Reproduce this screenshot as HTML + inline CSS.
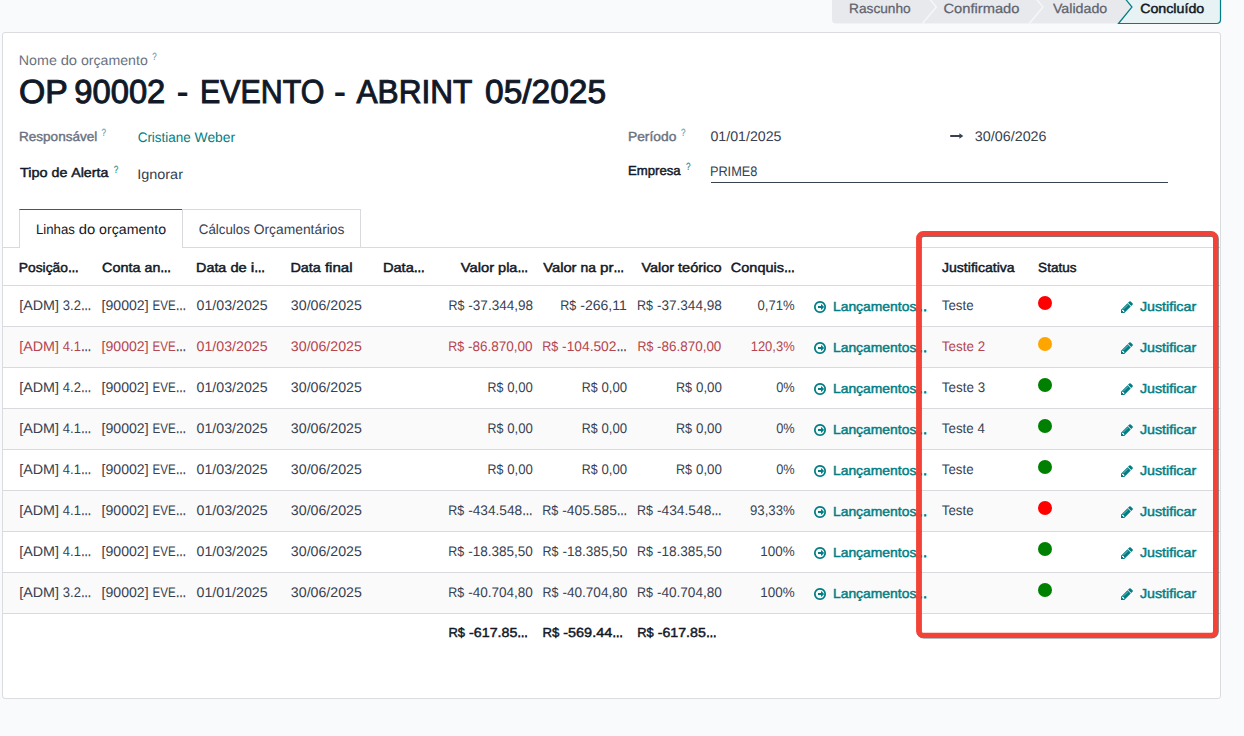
<!DOCTYPE html><html lang="pt-BR"><head><meta charset="utf-8"><title>Orçamento</title><style>
html,body{margin:0;padding:0}
body{width:1244px;height:736px;overflow:hidden;background:#f9fafb;font-family:"Liberation Sans",sans-serif;position:relative}
.t{position:absolute;white-space:nowrap;transform-origin:0 0;text-rendering:geometricPrecision}
.abs{position:absolute}
.ln{position:absolute;height:1px;background:#d8dadd}
.dot{position:absolute;width:14px;height:14px;border-radius:50%}
</style></head><body>
<svg class="abs" style="left:820px;top:0" width="424" height="30" viewBox="820 0 424 30">
<path d="M832 -10 H1118.5 L1132 7 L1118.5 23.5 H836 Q832 23.5 832 19.5 Z" fill="#e7e9ed"/>
<path d="M922.5 -9.5 L936.3 7 L922.5 23.5" fill="none" stroke="#f6f7f9" stroke-width="1.4"/>
<path d="M1029.3 -9.5 L1043 7 L1029.3 23.5" fill="none" stroke="#f6f7f9" stroke-width="1.4"/>
<path d="M1105 -26 L1132 7 L1118.5 23.5 H1216.5 Q1220.5 23.5 1220.5 19.5 V-10 Z" fill="#e6f2f3" stroke="#017e84" stroke-width="1.2"/>
</svg>
<div class="abs" style="left:2px;top:32px;width:1217px;height:665px;background:#fff;border:1px solid #dadcdf;border-radius:3px"></div>
<div class="abs" style="left:710.5px;top:182px;width:457px;height:1px;background:#374151"></div>
<svg class="abs" style="left:949px;top:130px" width="16" height="12" viewBox="949 130 16 12"><path d="M950.2 135 H959.4 V133.3 L963.3 136 L959.4 138.7 V137 H950.2 Z" fill="#374151"/></svg>
<div class="ln" style="left:3px;top:247px;width:1217px"></div>
<div class="abs" style="left:19px;top:209px;width:162px;height:38px;background:#fff;border:1px solid #d8dadd;border-top-color:#5f4a5a;border-bottom:0;box-sizing:content-box"></div><div class="abs" style="left:20px;top:247px;width:162px;height:1px;background:#fff"></div>
<div class="abs" style="left:182px;top:209px;width:178px;height:38px;border:1px solid #d8dadd;border-left:0;border-bottom:0"></div>
<div class="abs" style="left:3px;top:327px;width:1217px;height:40px;background:#fafafb"></div>
<div class="abs" style="left:3px;top:409px;width:1217px;height:40px;background:#fafafb"></div>
<div class="abs" style="left:3px;top:491px;width:1217px;height:40px;background:#fafafb"></div>
<div class="abs" style="left:3px;top:573px;width:1217px;height:40px;background:#fafafb"></div>
<div class="ln" style="left:3px;top:285px;width:1217px"></div>
<div class="ln" style="left:3px;top:326px;width:1217px"></div>
<div class="ln" style="left:3px;top:367px;width:1217px"></div>
<div class="ln" style="left:3px;top:408px;width:1217px"></div>
<div class="ln" style="left:3px;top:449px;width:1217px"></div>
<div class="ln" style="left:3px;top:490px;width:1217px"></div>
<div class="ln" style="left:3px;top:531px;width:1217px"></div>
<div class="ln" style="left:3px;top:572px;width:1217px"></div>
<div class="ln" style="left:3px;top:613px;width:1217px"></div>
<div class="dot" style="left:1038px;top:296px;background:#ff0000"></div>
<svg class="abs" style="left:813.8px;top:301.3px" width="12" height="12" viewBox="0 -1408 1536 1536"><path transform="scale(1,-1)" fill="#017e84" d="M1280 640q0 -14 -9 -23l-320 -320q-9 -9 -23 -9q-13 0 -22.500 9.500t-9.500 22.500v192h-352q-13 0 -22.500 9.500t-9.500 22.500v192q0 13 9.500 22.500t22.500 9.500h352v192q0 14 9 23t23 9q12 0 24 -10l319 -319q9 -9 9 -23zM1312 640q0 148 -73 273t-198 198t-273 73t-273 -73t-198 -198t-73 -273t73 -273t198 -198t273 -73t273 73t198 198t73 273zM1536 640q0 -209 -103 -385.500t-279.500 -279.500t-385.500 -103t-385.500 103t-279.500 279.500t-103 385.500t103 385.500t279.500 279.500t385.500 103t385.500 -103t279.500 -279.500t103 -385.500z"/></svg>
<svg class="abs" style="left:1121px;top:300.8px" width="12" height="12" viewBox="0 -1408 1536 1536"><path transform="scale(1,-1)" fill="#017e84" d="M363 0l91 91l-235 235l-91 -91v-107h128v-128h107zM886 928q0 22 -22 22q-10 0 -17 -7l-542 -542q-7 -7 -7 -17q0 -22 22 -22q10 0 17 7l542 542q7 7 7 17zM832 1120l416 -416l-832 -832h-416v416zM1515 1024q0 -53 -37 -90l-166 -166l-416 416l166 165q36 38 90 38q53 0 91 -38l235 -234q37 -39 37 -91z"/></svg>
<div class="dot" style="left:1038px;top:337px;background:#ffa500"></div>
<svg class="abs" style="left:813.8px;top:342.3px" width="12" height="12" viewBox="0 -1408 1536 1536"><path transform="scale(1,-1)" fill="#017e84" d="M1280 640q0 -14 -9 -23l-320 -320q-9 -9 -23 -9q-13 0 -22.500 9.500t-9.500 22.500v192h-352q-13 0 -22.500 9.500t-9.500 22.500v192q0 13 9.500 22.500t22.500 9.500h352v192q0 14 9 23t23 9q12 0 24 -10l319 -319q9 -9 9 -23zM1312 640q0 148 -73 273t-198 198t-273 73t-273 -73t-198 -198t-73 -273t73 -273t198 -198t273 -73t273 73t198 198t73 273zM1536 640q0 -209 -103 -385.500t-279.500 -279.500t-385.500 -103t-385.500 103t-279.500 279.500t-103 385.500t103 385.500t279.500 279.500t385.500 103t385.500 -103t279.500 -279.500t103 -385.500z"/></svg>
<svg class="abs" style="left:1121px;top:341.8px" width="12" height="12" viewBox="0 -1408 1536 1536"><path transform="scale(1,-1)" fill="#017e84" d="M363 0l91 91l-235 235l-91 -91v-107h128v-128h107zM886 928q0 22 -22 22q-10 0 -17 -7l-542 -542q-7 -7 -7 -17q0 -22 22 -22q10 0 17 7l542 542q7 7 7 17zM832 1120l416 -416l-832 -832h-416v416zM1515 1024q0 -53 -37 -90l-166 -166l-416 416l166 165q36 38 90 38q53 0 91 -38l235 -234q37 -39 37 -91z"/></svg>
<div class="dot" style="left:1038px;top:378px;background:#008000"></div>
<svg class="abs" style="left:813.8px;top:383.3px" width="12" height="12" viewBox="0 -1408 1536 1536"><path transform="scale(1,-1)" fill="#017e84" d="M1280 640q0 -14 -9 -23l-320 -320q-9 -9 -23 -9q-13 0 -22.500 9.500t-9.500 22.500v192h-352q-13 0 -22.500 9.500t-9.500 22.500v192q0 13 9.500 22.500t22.500 9.500h352v192q0 14 9 23t23 9q12 0 24 -10l319 -319q9 -9 9 -23zM1312 640q0 148 -73 273t-198 198t-273 73t-273 -73t-198 -198t-73 -273t73 -273t198 -198t273 -73t273 73t198 198t73 273zM1536 640q0 -209 -103 -385.500t-279.500 -279.500t-385.500 -103t-385.500 103t-279.500 279.500t-103 385.500t103 385.500t279.500 279.500t385.500 103t385.500 -103t279.500 -279.500t103 -385.500z"/></svg>
<svg class="abs" style="left:1121px;top:382.8px" width="12" height="12" viewBox="0 -1408 1536 1536"><path transform="scale(1,-1)" fill="#017e84" d="M363 0l91 91l-235 235l-91 -91v-107h128v-128h107zM886 928q0 22 -22 22q-10 0 -17 -7l-542 -542q-7 -7 -7 -17q0 -22 22 -22q10 0 17 7l542 542q7 7 7 17zM832 1120l416 -416l-832 -832h-416v416zM1515 1024q0 -53 -37 -90l-166 -166l-416 416l166 165q36 38 90 38q53 0 91 -38l235 -234q37 -39 37 -91z"/></svg>
<div class="dot" style="left:1038px;top:419px;background:#008000"></div>
<svg class="abs" style="left:813.8px;top:424.3px" width="12" height="12" viewBox="0 -1408 1536 1536"><path transform="scale(1,-1)" fill="#017e84" d="M1280 640q0 -14 -9 -23l-320 -320q-9 -9 -23 -9q-13 0 -22.500 9.500t-9.500 22.500v192h-352q-13 0 -22.500 9.500t-9.500 22.500v192q0 13 9.500 22.500t22.500 9.500h352v192q0 14 9 23t23 9q12 0 24 -10l319 -319q9 -9 9 -23zM1312 640q0 148 -73 273t-198 198t-273 73t-273 -73t-198 -198t-73 -273t73 -273t198 -198t273 -73t273 73t198 198t73 273zM1536 640q0 -209 -103 -385.500t-279.500 -279.500t-385.500 -103t-385.500 103t-279.500 279.500t-103 385.500t103 385.500t279.500 279.500t385.500 103t385.500 -103t279.500 -279.500t103 -385.500z"/></svg>
<svg class="abs" style="left:1121px;top:423.8px" width="12" height="12" viewBox="0 -1408 1536 1536"><path transform="scale(1,-1)" fill="#017e84" d="M363 0l91 91l-235 235l-91 -91v-107h128v-128h107zM886 928q0 22 -22 22q-10 0 -17 -7l-542 -542q-7 -7 -7 -17q0 -22 22 -22q10 0 17 7l542 542q7 7 7 17zM832 1120l416 -416l-832 -832h-416v416zM1515 1024q0 -53 -37 -90l-166 -166l-416 416l166 165q36 38 90 38q53 0 91 -38l235 -234q37 -39 37 -91z"/></svg>
<div class="dot" style="left:1038px;top:460px;background:#008000"></div>
<svg class="abs" style="left:813.8px;top:465.3px" width="12" height="12" viewBox="0 -1408 1536 1536"><path transform="scale(1,-1)" fill="#017e84" d="M1280 640q0 -14 -9 -23l-320 -320q-9 -9 -23 -9q-13 0 -22.500 9.500t-9.500 22.500v192h-352q-13 0 -22.500 9.500t-9.500 22.500v192q0 13 9.500 22.500t22.500 9.500h352v192q0 14 9 23t23 9q12 0 24 -10l319 -319q9 -9 9 -23zM1312 640q0 148 -73 273t-198 198t-273 73t-273 -73t-198 -198t-73 -273t73 -273t198 -198t273 -73t273 73t198 198t73 273zM1536 640q0 -209 -103 -385.500t-279.500 -279.500t-385.500 -103t-385.500 103t-279.500 279.500t-103 385.500t103 385.500t279.500 279.500t385.500 103t385.500 -103t279.500 -279.500t103 -385.500z"/></svg>
<svg class="abs" style="left:1121px;top:464.8px" width="12" height="12" viewBox="0 -1408 1536 1536"><path transform="scale(1,-1)" fill="#017e84" d="M363 0l91 91l-235 235l-91 -91v-107h128v-128h107zM886 928q0 22 -22 22q-10 0 -17 -7l-542 -542q-7 -7 -7 -17q0 -22 22 -22q10 0 17 7l542 542q7 7 7 17zM832 1120l416 -416l-832 -832h-416v416zM1515 1024q0 -53 -37 -90l-166 -166l-416 416l166 165q36 38 90 38q53 0 91 -38l235 -234q37 -39 37 -91z"/></svg>
<div class="dot" style="left:1038px;top:501px;background:#ff0000"></div>
<svg class="abs" style="left:813.8px;top:506.3px" width="12" height="12" viewBox="0 -1408 1536 1536"><path transform="scale(1,-1)" fill="#017e84" d="M1280 640q0 -14 -9 -23l-320 -320q-9 -9 -23 -9q-13 0 -22.500 9.500t-9.500 22.500v192h-352q-13 0 -22.500 9.500t-9.500 22.500v192q0 13 9.500 22.500t22.500 9.500h352v192q0 14 9 23t23 9q12 0 24 -10l319 -319q9 -9 9 -23zM1312 640q0 148 -73 273t-198 198t-273 73t-273 -73t-198 -198t-73 -273t73 -273t198 -198t273 -73t273 73t198 198t73 273zM1536 640q0 -209 -103 -385.500t-279.500 -279.500t-385.500 -103t-385.500 103t-279.500 279.500t-103 385.500t103 385.500t279.500 279.500t385.500 103t385.500 -103t279.500 -279.500t103 -385.500z"/></svg>
<svg class="abs" style="left:1121px;top:505.8px" width="12" height="12" viewBox="0 -1408 1536 1536"><path transform="scale(1,-1)" fill="#017e84" d="M363 0l91 91l-235 235l-91 -91v-107h128v-128h107zM886 928q0 22 -22 22q-10 0 -17 -7l-542 -542q-7 -7 -7 -17q0 -22 22 -22q10 0 17 7l542 542q7 7 7 17zM832 1120l416 -416l-832 -832h-416v416zM1515 1024q0 -53 -37 -90l-166 -166l-416 416l166 165q36 38 90 38q53 0 91 -38l235 -234q37 -39 37 -91z"/></svg>
<div class="dot" style="left:1038px;top:542px;background:#008000"></div>
<svg class="abs" style="left:813.8px;top:547.3px" width="12" height="12" viewBox="0 -1408 1536 1536"><path transform="scale(1,-1)" fill="#017e84" d="M1280 640q0 -14 -9 -23l-320 -320q-9 -9 -23 -9q-13 0 -22.500 9.500t-9.500 22.500v192h-352q-13 0 -22.500 9.500t-9.500 22.500v192q0 13 9.500 22.500t22.500 9.500h352v192q0 14 9 23t23 9q12 0 24 -10l319 -319q9 -9 9 -23zM1312 640q0 148 -73 273t-198 198t-273 73t-273 -73t-198 -198t-73 -273t73 -273t198 -198t273 -73t273 73t198 198t73 273zM1536 640q0 -209 -103 -385.500t-279.500 -279.500t-385.500 -103t-385.500 103t-279.500 279.500t-103 385.500t103 385.500t279.500 279.500t385.500 103t385.500 -103t279.500 -279.500t103 -385.500z"/></svg>
<svg class="abs" style="left:1121px;top:546.8px" width="12" height="12" viewBox="0 -1408 1536 1536"><path transform="scale(1,-1)" fill="#017e84" d="M363 0l91 91l-235 235l-91 -91v-107h128v-128h107zM886 928q0 22 -22 22q-10 0 -17 -7l-542 -542q-7 -7 -7 -17q0 -22 22 -22q10 0 17 7l542 542q7 7 7 17zM832 1120l416 -416l-832 -832h-416v416zM1515 1024q0 -53 -37 -90l-166 -166l-416 416l166 165q36 38 90 38q53 0 91 -38l235 -234q37 -39 37 -91z"/></svg>
<div class="dot" style="left:1038px;top:583px;background:#008000"></div>
<svg class="abs" style="left:813.8px;top:588.3px" width="12" height="12" viewBox="0 -1408 1536 1536"><path transform="scale(1,-1)" fill="#017e84" d="M1280 640q0 -14 -9 -23l-320 -320q-9 -9 -23 -9q-13 0 -22.500 9.500t-9.500 22.500v192h-352q-13 0 -22.500 9.500t-9.500 22.500v192q0 13 9.500 22.500t22.500 9.500h352v192q0 14 9 23t23 9q12 0 24 -10l319 -319q9 -9 9 -23zM1312 640q0 148 -73 273t-198 198t-273 73t-273 -73t-198 -198t-73 -273t73 -273t198 -198t273 -73t273 73t198 198t73 273zM1536 640q0 -209 -103 -385.500t-279.500 -279.500t-385.500 -103t-385.500 103t-279.500 279.500t-103 385.500t103 385.500t279.500 279.500t385.500 103t385.500 -103t279.500 -279.500t103 -385.500z"/></svg>
<svg class="abs" style="left:1121px;top:587.8px" width="12" height="12" viewBox="0 -1408 1536 1536"><path transform="scale(1,-1)" fill="#017e84" d="M363 0l91 91l-235 235l-91 -91v-107h128v-128h107zM886 928q0 22 -22 22q-10 0 -17 -7l-542 -542q-7 -7 -7 -17q0 -22 22 -22q10 0 17 7l542 542q7 7 7 17zM832 1120l416 -416l-832 -832h-416v416zM1515 1024q0 -53 -37 -90l-166 -166l-416 416l166 165q36 38 90 38q53 0 91 -38l235 -234q37 -39 37 -91z"/></svg>
<nav class="statusbar">
<span class="t" style="left:849px;top:-2px;font-size:13.4px;line-height:19px;color:#5f636f;-webkit-text-stroke:0.25px #5f636f;transform:translate(0.05px,0.68px) scaleX(1.0221);">Rascunho</span>
<span class="t" style="left:943px;top:-2px;font-size:13.4px;line-height:19px;color:#5f636f;-webkit-text-stroke:0.25px #5f636f;transform:translate(0.44px,0.68px) scaleX(1.0978);">Confirmado</span>
<span class="t" style="left:1052px;top:-2px;font-size:13.4px;line-height:19px;color:#5f636f;-webkit-text-stroke:0.25px #5f636f;transform:translate(0.92px,0.68px) scaleX(1.0619);">Validado</span>
<span class="t" style="left:1140px;top:-1px;font-size:13.2px;line-height:18px;color:#111827;-webkit-text-stroke:0.45px #111827;transform:translate(0.16px,0.58px) scaleX(1.0783);">Concluído</span>
</nav>
<header class="title">
<span class="t" style="left:18px;top:51px;font-size:13.8px;line-height:19px;color:#6b7280;transform:translate(0.79px,0.00px) scaleX(1.0330);">Nome</span> <span class="t" style="left:60px;top:51px;font-size:13.8px;line-height:19px;color:#6b7280;transform:translate(0.65px,0.00px) scaleX(1.0699);">do</span> <span class="t" style="left:80px;top:51px;font-size:13.8px;line-height:19px;color:#6b7280;transform:translate(0.91px,0.00px) scaleX(1.0256);">orçamento</span>
<span class="t" style="left:152px;top:50px;font-size:10.5px;line-height:15px;color:#6a9fab;-webkit-text-stroke:0.2px #6a9fab;transform:translate(0.20px,0.10px) scaleX(0.7525);">?</span>
<span class="t" style="left:18px;top:70px;font-size:33.2px;line-height:46px;color:#111827;-webkit-text-stroke:1.0px #111827;transform:translate(0.92px,0.40px) scaleX(1.0174);">OP</span>
<span class="t" style="left:74px;top:70px;font-size:33.2px;line-height:46px;color:#111827;-webkit-text-stroke:1.0px #111827;transform:translate(0.26px,0.40px) scaleX(0.9864);">90002</span>
<span class="t" style="left:176px;top:70px;font-size:33.2px;line-height:46px;color:#111827;-webkit-text-stroke:1.0px #111827;transform:translate(0.95px,0.40px) scaleX(1.0092);">-</span>
<span class="t" style="left:200px;top:70px;font-size:33.2px;line-height:46px;color:#111827;-webkit-text-stroke:1.0px #111827;transform:translate(0.02px,0.40px) scaleX(0.9160);">EVENTO</span>
<span class="t" style="left:334px;top:70px;font-size:33.2px;line-height:46px;color:#111827;-webkit-text-stroke:1.0px #111827;transform:translate(0.34px,0.40px) scaleX(1.0206);">-</span>
<span class="t" style="left:356px;top:70px;font-size:33.2px;line-height:46px;color:#111827;-webkit-text-stroke:1.0px #111827;transform:translate(0.50px,0.40px) scaleX(0.9523);">ABRINT</span>
<span class="t" style="left:485px;top:70px;font-size:33.2px;line-height:46px;color:#111827;-webkit-text-stroke:1.0px #111827;transform:translate(0.05px,0.40px) scaleX(1.0091);">05/2025</span>
</header>
<section class="fields-left">
<span class="t" style="left:19px;top:127px;font-size:13.2px;line-height:18px;color:#6b7280;-webkit-text-stroke:0.4px #6b7280;transform:translate(0.04px,0.80px) scaleX(1.0254);">Responsável</span>
<span class="t" style="left:101px;top:125px;font-size:10.5px;line-height:15px;color:#6a9fab;-webkit-text-stroke:0.2px #6a9fab;transform:translate(0.59px,0.90px) scaleX(0.7723);">?</span>
<span class="t" style="left:137px;top:128px;font-size:13.8px;line-height:19px;color:#017e84;transform:translate(0.67px,0.00px) scaleX(0.9747);">Cristiane</span> <span class="t" style="left:194px;top:128px;font-size:13.8px;line-height:19px;color:#017e84;transform:translate(0.56px,0.00px) scaleX(1.0053);">Weber</span>
<span class="t" style="left:19px;top:164px;font-size:13.2px;line-height:18px;color:#111827;-webkit-text-stroke:0.45px #111827;transform:translate(0.90px,0.28px) scaleX(1.0980);">Tipo</span> <span class="t" style="left:51px;top:164px;font-size:13.2px;line-height:18px;color:#111827;-webkit-text-stroke:0.45px #111827;transform:translate(0.46px,0.28px) scaleX(1.0792);">de</span> <span class="t" style="left:71px;top:164px;font-size:13.2px;line-height:18px;color:#111827;-webkit-text-stroke:0.45px #111827;transform:translate(0.22px,0.28px) scaleX(1.0779);">Alerta</span>
<span class="t" style="left:113px;top:162px;font-size:10.5px;line-height:15px;color:#1f8a93;-webkit-text-stroke:0.2px #1f8a93;transform:translate(0.79px,0.90px) scaleX(0.7723);">?</span>
<span class="t" style="left:137px;top:164px;font-size:13.8px;line-height:19px;color:#374151;transform:translate(0.17px,0.50px) scaleX(1.0475);">Ignorar</span>
</section>
<section class="fields-right">
<span class="t" style="left:627px;top:127px;font-size:13.2px;line-height:18px;color:#6b7280;-webkit-text-stroke:0.4px #6b7280;transform:translate(0.92px,0.80px) scaleX(1.0478);">Período</span>
<span class="t" style="left:681px;top:125px;font-size:10.5px;line-height:15px;color:#6a9fab;-webkit-text-stroke:0.2px #6a9fab;transform:translate(0.09px,0.90px) scaleX(0.7723);">?</span>
<span class="t" style="left:710px;top:127px;font-size:13.8px;line-height:19px;color:#374151;transform:translate(0.46px,0.00px) scaleX(1.0282);">01/01/2025</span>
<span class="t" style="left:974px;top:127px;font-size:13.8px;line-height:19px;color:#374151;transform:translate(0.85px,0.00px) scaleX(1.0385);">30/06/2026</span>
<span class="t" style="left:627px;top:161px;font-size:13.2px;line-height:18px;color:#111827;-webkit-text-stroke:0.45px #111827;transform:translate(1.00px,0.78px) scaleX(0.9977);">Empresa</span>
<span class="t" style="left:685px;top:160px;font-size:10.5px;line-height:15px;color:#1f8a93;-webkit-text-stroke:0.2px #1f8a93;transform:translate(0.99px,0.10px) scaleX(0.7723);">?</span>
<span class="t" style="left:709px;top:161px;font-size:13.8px;line-height:19px;color:#374151;transform:translate(0.90px,0.50px) scaleX(0.9248);">PRIME8</span>
</section>
<nav class="tabs">
<span class="t" style="left:35px;top:219px;font-size:13.8px;line-height:19px;color:#111827;transform:translate(0.97px,0.60px) scaleX(0.9578);">Linhas</span> <span class="t" style="left:78px;top:219px;font-size:13.8px;line-height:19px;color:#111827;transform:translate(0.76px,0.60px) scaleX(1.0722);">do</span> <span class="t" style="left:99px;top:219px;font-size:13.8px;line-height:19px;color:#111827;transform:translate(0.06px,0.60px) scaleX(1.0278);">orçamento</span>
<span class="t" style="left:198px;top:219px;font-size:13.8px;line-height:19px;color:#374151;transform:translate(0.77px,0.60px) scaleX(0.9663);">Cálculos</span> <span class="t" style="left:253px;top:219px;font-size:13.8px;line-height:19px;color:#374151;transform:translate(0.76px,0.60px) scaleX(1.0020);">Orçamentários</span>
</nav>
<div class="thead">
<span class="t" style="left:18px;top:258px;font-size:13.2px;line-height:18px;color:#111827;-webkit-text-stroke:0.45px #111827;transform:translate(0.85px,0.67px) scaleX(1.0460);">Posição</span> <span class="t" style="left:67px;top:258px;font-size:13.2px;line-height:18px;color:#111827;-webkit-text-stroke:0.8px #111827;transform:translate(0.97px,0.67px) scaleX(0.8145);">…</span>
<span class="t" style="left:102px;top:258px;font-size:13.2px;line-height:18px;color:#111827;-webkit-text-stroke:0.45px #111827;transform:translate(0.05px,0.67px) scaleX(1.0915);">Conta</span> <span class="t" style="left:144px;top:258px;font-size:13.2px;line-height:18px;color:#111827;-webkit-text-stroke:0.45px #111827;transform:translate(0.52px,0.67px) scaleX(1.0747);">an</span> <span class="t" style="left:160px;top:258px;font-size:13.2px;line-height:18px;color:#111827;-webkit-text-stroke:0.8px #111827;transform:translate(0.30px,0.67px) scaleX(0.8203);">…</span>
<span class="t" style="left:196px;top:258px;font-size:13.2px;line-height:18px;color:#111827;-webkit-text-stroke:0.45px #111827;transform:translate(0.11px,0.67px) scaleX(1.0849);">Data</span> <span class="t" style="left:230px;top:258px;font-size:13.2px;line-height:18px;color:#111827;-webkit-text-stroke:0.45px #111827;transform:translate(0.38px,0.67px) scaleX(1.1122);">de</span> <span class="t" style="left:250px;top:258px;font-size:13.2px;line-height:18px;color:#111827;-webkit-text-stroke:0.45px #111827;transform:translate(0.74px,0.67px) scaleX(1.2129);">i</span> <span class="t" style="left:254px;top:258px;font-size:13.2px;line-height:18px;color:#111827;-webkit-text-stroke:0.8px #111827;transform:translate(0.30px,0.67px) scaleX(0.8207);">…</span>
<span class="t" style="left:290px;top:258px;font-size:13.2px;line-height:18px;color:#111827;-webkit-text-stroke:0.45px #111827;transform:translate(0.40px,0.67px) scaleX(1.0918);">Data</span> <span class="t" style="left:324px;top:258px;font-size:13.2px;line-height:18px;color:#111827;-webkit-text-stroke:0.45px #111827;transform:translate(0.89px,0.67px) scaleX(1.1429);">final</span>
<span class="t" style="left:382px;top:258px;font-size:13.2px;line-height:18px;color:#111827;-webkit-text-stroke:0.45px #111827;transform:translate(0.88px,0.67px) scaleX(1.1113);">Data</span> <span class="t" style="left:413px;top:258px;font-size:13.2px;line-height:18px;color:#111827;-webkit-text-stroke:0.8px #111827;transform:translate(0.87px,0.67px) scaleX(0.8407);">…</span>
<span class="t" style="left:460px;top:258px;font-size:13.2px;line-height:18px;color:#111827;-webkit-text-stroke:0.45px #111827;transform:translate(0.73px,0.67px) scaleX(1.1186);">Valor</span> <span class="t" style="left:498px;top:258px;font-size:13.2px;line-height:18px;color:#111827;-webkit-text-stroke:0.45px #111827;transform:translate(0.06px,0.67px) scaleX(1.1001);">pla</span> <span class="t" style="left:517px;top:258px;font-size:13.2px;line-height:18px;color:#111827;-webkit-text-stroke:0.8px #111827;transform:translate(0.44px,0.67px) scaleX(0.8080);">…</span>
<span class="t" style="left:543px;top:258px;font-size:13.2px;line-height:18px;color:#111827;-webkit-text-stroke:0.45px #111827;transform:translate(0.23px,0.67px) scaleX(1.1161);">Valor</span> <span class="t" style="left:580px;top:258px;font-size:13.2px;line-height:18px;color:#111827;-webkit-text-stroke:0.45px #111827;transform:translate(0.48px,0.67px) scaleX(1.0563);">na</span> <span class="t" style="left:599px;top:258px;font-size:13.2px;line-height:18px;color:#111827;-webkit-text-stroke:0.45px #111827;transform:translate(0.95px,0.67px) scaleX(1.1516);">pr</span> <span class="t" style="left:613px;top:258px;font-size:13.2px;line-height:18px;color:#111827;-webkit-text-stroke:0.8px #111827;transform:translate(0.46px,0.67px) scaleX(0.8063);">…</span>
<span class="t" style="left:641px;top:258px;font-size:13.2px;line-height:18px;color:#111827;-webkit-text-stroke:0.45px #111827;transform:translate(0.52px,0.67px) scaleX(1.0936);">Valor</span> <span class="t" style="left:678px;top:258px;font-size:13.2px;line-height:18px;color:#111827;-webkit-text-stroke:0.45px #111827;transform:translate(0.03px,0.67px) scaleX(1.1014);">teórico</span>
<span class="t" style="left:730px;top:258px;font-size:13.2px;line-height:18px;color:#111827;-webkit-text-stroke:0.45px #111827;transform:translate(0.85px,0.67px) scaleX(1.0979);">Conquis</span> <span class="t" style="left:784px;top:258px;font-size:13.2px;line-height:18px;color:#111827;-webkit-text-stroke:0.8px #111827;transform:translate(0.02px,0.67px) scaleX(0.8274);">…</span>
<span class="t" style="left:942px;top:258px;font-size:13.2px;line-height:18px;color:#111827;-webkit-text-stroke:0.45px #111827;transform:translate(0.01px,0.67px) scaleX(1.0653);">Justificativa</span>
<span class="t" style="left:1038px;top:258px;font-size:13.2px;line-height:18px;color:#111827;-webkit-text-stroke:0.45px #111827;transform:translate(0.10px,0.67px) scaleX(1.0261);">Status</span>
</div>
<div class="row r1">
<span class="t" style="left:19px;top:296px;font-size:13.8px;line-height:19px;color:#374151;transform:translate(0.21px,0.00px) scaleX(1.0376);">[ADM]</span> <span class="t" style="left:62px;top:296px;font-size:13.8px;line-height:19px;color:#374151;transform:translate(0.81px,0.00px) scaleX(0.9428);">3.2</span> <span class="t" style="left:80px;top:296px;font-size:13.8px;line-height:19px;color:#374151;-webkit-text-stroke:0.35px #374151;transform:translate(0.89px,0.00px) scaleX(0.7459);">…</span>
<span class="t" style="left:101px;top:296px;font-size:13.8px;line-height:19px;color:#374151;transform:translate(0.62px,0.00px) scaleX(1.0209);">[90002]</span> <span class="t" style="left:152px;top:296px;font-size:13.8px;line-height:19px;color:#374151;transform:translate(0.53px,0.00px) scaleX(0.8431);">EVE</span> <span class="t" style="left:175px;top:296px;font-size:13.8px;line-height:19px;color:#374151;-webkit-text-stroke:0.35px #374151;transform:translate(0.81px,0.00px) scaleX(0.7610);">…</span>
<span class="t" style="left:196px;top:296px;font-size:13.8px;line-height:19px;color:#374151;transform:translate(0.56px,0.00px) scaleX(1.0282);">01/03/2025</span>
<span class="t" style="left:290px;top:296px;font-size:13.8px;line-height:19px;color:#374151;transform:translate(0.86px,0.00px) scaleX(1.0282);">30/06/2025</span>
<span class="t" style="left:448px;top:296px;font-size:13.8px;line-height:19px;color:#374151;transform:translate(0.52px,0.00px) scaleX(0.9053);">R$</span> <span class="t" style="left:468px;top:296px;font-size:13.8px;line-height:19px;color:#374151;transform:translate(0.34px,0.00px) scaleX(0.9806);">-37.344,98</span>
<span class="t" style="left:560px;top:296px;font-size:13.8px;line-height:19px;color:#374151;transform:translate(0.32px,0.00px) scaleX(0.9082);">R$</span> <span class="t" style="left:580px;top:296px;font-size:13.8px;line-height:19px;color:#374151;transform:translate(0.20px,0.00px) scaleX(1.0194);">-266,11</span>
<span class="t" style="left:637px;top:296px;font-size:13.8px;line-height:19px;color:#374151;transform:translate(0.02px,0.00px) scaleX(0.9085);">R$</span> <span class="t" style="left:656px;top:296px;font-size:13.8px;line-height:19px;color:#374151;transform:translate(0.91px,0.00px) scaleX(0.9841);">-37.344,98</span>
<span class="t" style="left:757px;top:296px;font-size:13.8px;line-height:19px;color:#374151;transform:translate(0.59px,0.00px) scaleX(0.9481);">0,71%</span>
<span class="t" style="left:832px;top:298px;font-size:13.2px;line-height:18px;color:#017e84;-webkit-text-stroke:0.45px #017e84;transform:translate(0.94px,0.47px) scaleX(1.0532);">Lançamentos</span>
<span class="t" style="left:914px;top:298px;font-size:13.2px;line-height:18px;color:#017e84;-webkit-text-stroke:0.8px #017e84;transform:translate(0.17px,0.47px) scaleX(1.0051);">…</span>
<span class="t" style="left:941px;top:296px;font-size:13.8px;line-height:19px;color:#374151;transform:translate(0.79px,0.00px) scaleX(0.9625);">Teste</span>
<span class="t" style="left:1139px;top:298px;font-size:13.2px;line-height:18px;color:#017e84;-webkit-text-stroke:0.45px #017e84;transform:translate(0.90px,0.47px) scaleX(1.0819);">Justificar</span>
</div>
<div class="row r2">
<span class="t" style="left:19px;top:337px;font-size:13.8px;line-height:19px;color:#b4454f;transform:translate(0.21px,0.00px) scaleX(1.0376);">[ADM]</span> <span class="t" style="left:62px;top:337px;font-size:13.8px;line-height:19px;color:#b4454f;transform:translate(0.81px,0.00px) scaleX(0.9428);">4.1</span> <span class="t" style="left:80px;top:337px;font-size:13.8px;line-height:19px;color:#374151;-webkit-text-stroke:0.35px #374151;transform:translate(0.89px,0.00px) scaleX(0.7459);">…</span>
<span class="t" style="left:101px;top:337px;font-size:13.8px;line-height:19px;color:#b4454f;transform:translate(0.62px,0.00px) scaleX(1.0209);">[90002]</span> <span class="t" style="left:152px;top:337px;font-size:13.8px;line-height:19px;color:#b4454f;transform:translate(0.53px,0.00px) scaleX(0.8431);">EVE</span> <span class="t" style="left:175px;top:337px;font-size:13.8px;line-height:19px;color:#374151;-webkit-text-stroke:0.35px #374151;transform:translate(0.81px,0.00px) scaleX(0.7610);">…</span>
<span class="t" style="left:196px;top:337px;font-size:13.8px;line-height:19px;color:#b4454f;transform:translate(0.56px,0.00px) scaleX(1.0282);">01/03/2025</span>
<span class="t" style="left:290px;top:337px;font-size:13.8px;line-height:19px;color:#b4454f;transform:translate(0.86px,0.00px) scaleX(1.0282);">30/06/2025</span>
<span class="t" style="left:448px;top:337px;font-size:13.8px;line-height:19px;color:#b4454f;transform:translate(0.33px,0.00px) scaleX(0.9030);">R$</span> <span class="t" style="left:468px;top:337px;font-size:13.8px;line-height:19px;color:#b4454f;transform:translate(0.09px,0.00px) scaleX(0.9781);">-86.870,00</span>
<span class="t" style="left:542px;top:337px;font-size:13.8px;line-height:19px;color:#b4454f;transform:translate(0.22px,0.00px) scaleX(0.9087);">R$</span> <span class="t" style="left:562px;top:337px;font-size:13.8px;line-height:19px;color:#b4454f;transform:translate(0.11px,0.00px) scaleX(0.9966);">-104.502</span> <span class="t" style="left:616px;top:337px;font-size:13.8px;line-height:19px;color:#374151;-webkit-text-stroke:0.35px #374151;transform:translate(0.41px,0.00px) scaleX(0.7530);">…</span>
<span class="t" style="left:637px;top:337px;font-size:13.8px;line-height:19px;color:#b4454f;transform:translate(0.43px,0.00px) scaleX(0.8986);">R$</span> <span class="t" style="left:657px;top:337px;font-size:13.8px;line-height:19px;color:#b4454f;transform:translate(0.10px,0.00px) scaleX(0.9734);">-86.870,00</span>
<span class="t" style="left:750px;top:337px;font-size:13.8px;line-height:19px;color:#b4454f;transform:translate(0.69px,0.00px) scaleX(0.9400);">120,3%</span>
<span class="t" style="left:832px;top:339px;font-size:13.2px;line-height:18px;color:#017e84;-webkit-text-stroke:0.45px #017e84;transform:translate(0.94px,0.47px) scaleX(1.0532);">Lançamentos</span>
<span class="t" style="left:914px;top:339px;font-size:13.2px;line-height:18px;color:#017e84;-webkit-text-stroke:0.8px #017e84;transform:translate(0.17px,0.47px) scaleX(1.0051);">…</span>
<span class="t" style="left:941px;top:337px;font-size:13.8px;line-height:19px;color:#b4454f;transform:translate(0.79px,0.00px) scaleX(0.9724);">Teste</span> <span class="t" style="left:977px;top:337px;font-size:13.8px;line-height:19px;color:#b4454f;transform:translate(0.63px,0.00px) scaleX(0.9655);">2</span>
<span class="t" style="left:1139px;top:339px;font-size:13.2px;line-height:18px;color:#017e84;-webkit-text-stroke:0.45px #017e84;transform:translate(0.90px,0.47px) scaleX(1.0819);">Justificar</span>
</div>
<div class="row r3">
<span class="t" style="left:19px;top:378px;font-size:13.8px;line-height:19px;color:#374151;transform:translate(0.21px,0.00px) scaleX(1.0376);">[ADM]</span> <span class="t" style="left:62px;top:378px;font-size:13.8px;line-height:19px;color:#374151;transform:translate(0.81px,0.00px) scaleX(0.9428);">4.2</span> <span class="t" style="left:80px;top:378px;font-size:13.8px;line-height:19px;color:#374151;-webkit-text-stroke:0.35px #374151;transform:translate(0.89px,0.00px) scaleX(0.7459);">…</span>
<span class="t" style="left:101px;top:378px;font-size:13.8px;line-height:19px;color:#374151;transform:translate(0.62px,0.00px) scaleX(1.0209);">[90002]</span> <span class="t" style="left:152px;top:378px;font-size:13.8px;line-height:19px;color:#374151;transform:translate(0.53px,0.00px) scaleX(0.8431);">EVE</span> <span class="t" style="left:175px;top:378px;font-size:13.8px;line-height:19px;color:#374151;-webkit-text-stroke:0.35px #374151;transform:translate(0.81px,0.00px) scaleX(0.7610);">…</span>
<span class="t" style="left:196px;top:378px;font-size:13.8px;line-height:19px;color:#374151;transform:translate(0.56px,0.00px) scaleX(1.0282);">01/03/2025</span>
<span class="t" style="left:290px;top:378px;font-size:13.8px;line-height:19px;color:#374151;transform:translate(0.86px,0.00px) scaleX(1.0282);">30/06/2025</span>
<span class="t" style="left:487px;top:378px;font-size:13.8px;line-height:19px;color:#374151;transform:translate(0.53px,0.00px) scaleX(0.8997);">R$</span> <span class="t" style="left:507px;top:378px;font-size:13.8px;line-height:19px;color:#374151;transform:translate(0.23px,0.00px) scaleX(0.9532);">0,00</span>
<span class="t" style="left:581px;top:378px;font-size:13.8px;line-height:19px;color:#374151;transform:translate(0.73px,0.00px) scaleX(0.9018);">R$</span> <span class="t" style="left:601px;top:378px;font-size:13.8px;line-height:19px;color:#374151;transform:translate(0.47px,0.00px) scaleX(0.9553);">0,00</span>
<span class="t" style="left:676px;top:378px;font-size:13.8px;line-height:19px;color:#374151;transform:translate(0.02px,0.00px) scaleX(0.9120);">R$</span> <span class="t" style="left:695px;top:378px;font-size:13.8px;line-height:19px;color:#374151;transform:translate(0.98px,0.00px) scaleX(0.9662);">0,00</span>
<span class="t" style="left:776px;top:378px;font-size:13.8px;line-height:19px;color:#374151;transform:translate(0.20px,0.00px) scaleX(0.9266);">0%</span>
<span class="t" style="left:832px;top:380px;font-size:13.2px;line-height:18px;color:#017e84;-webkit-text-stroke:0.45px #017e84;transform:translate(0.94px,0.47px) scaleX(1.0532);">Lançamentos</span>
<span class="t" style="left:914px;top:380px;font-size:13.2px;line-height:18px;color:#017e84;-webkit-text-stroke:0.8px #017e84;transform:translate(0.17px,0.47px) scaleX(1.0051);">…</span>
<span class="t" style="left:941px;top:378px;font-size:13.8px;line-height:19px;color:#374151;transform:translate(0.79px,0.00px) scaleX(0.9724);">Teste</span> <span class="t" style="left:977px;top:378px;font-size:13.8px;line-height:19px;color:#374151;transform:translate(0.63px,0.00px) scaleX(0.9655);">3</span>
<span class="t" style="left:1139px;top:380px;font-size:13.2px;line-height:18px;color:#017e84;-webkit-text-stroke:0.45px #017e84;transform:translate(0.90px,0.47px) scaleX(1.0819);">Justificar</span>
</div>
<div class="row r4">
<span class="t" style="left:19px;top:419px;font-size:13.8px;line-height:19px;color:#374151;transform:translate(0.21px,0.00px) scaleX(1.0376);">[ADM]</span> <span class="t" style="left:62px;top:419px;font-size:13.8px;line-height:19px;color:#374151;transform:translate(0.81px,0.00px) scaleX(0.9428);">4.1</span> <span class="t" style="left:80px;top:419px;font-size:13.8px;line-height:19px;color:#374151;-webkit-text-stroke:0.35px #374151;transform:translate(0.89px,0.00px) scaleX(0.7459);">…</span>
<span class="t" style="left:101px;top:419px;font-size:13.8px;line-height:19px;color:#374151;transform:translate(0.62px,0.00px) scaleX(1.0209);">[90002]</span> <span class="t" style="left:152px;top:419px;font-size:13.8px;line-height:19px;color:#374151;transform:translate(0.53px,0.00px) scaleX(0.8431);">EVE</span> <span class="t" style="left:175px;top:419px;font-size:13.8px;line-height:19px;color:#374151;-webkit-text-stroke:0.35px #374151;transform:translate(0.81px,0.00px) scaleX(0.7610);">…</span>
<span class="t" style="left:196px;top:419px;font-size:13.8px;line-height:19px;color:#374151;transform:translate(0.56px,0.00px) scaleX(1.0282);">01/03/2025</span>
<span class="t" style="left:290px;top:419px;font-size:13.8px;line-height:19px;color:#374151;transform:translate(0.86px,0.00px) scaleX(1.0282);">30/06/2025</span>
<span class="t" style="left:487px;top:419px;font-size:13.8px;line-height:19px;color:#374151;transform:translate(0.53px,0.00px) scaleX(0.8997);">R$</span> <span class="t" style="left:507px;top:419px;font-size:13.8px;line-height:19px;color:#374151;transform:translate(0.23px,0.00px) scaleX(0.9532);">0,00</span>
<span class="t" style="left:581px;top:419px;font-size:13.8px;line-height:19px;color:#374151;transform:translate(0.73px,0.00px) scaleX(0.9018);">R$</span> <span class="t" style="left:601px;top:419px;font-size:13.8px;line-height:19px;color:#374151;transform:translate(0.47px,0.00px) scaleX(0.9553);">0,00</span>
<span class="t" style="left:676px;top:419px;font-size:13.8px;line-height:19px;color:#374151;transform:translate(0.02px,0.00px) scaleX(0.9120);">R$</span> <span class="t" style="left:695px;top:419px;font-size:13.8px;line-height:19px;color:#374151;transform:translate(0.98px,0.00px) scaleX(0.9662);">0,00</span>
<span class="t" style="left:776px;top:419px;font-size:13.8px;line-height:19px;color:#374151;transform:translate(0.20px,0.00px) scaleX(0.9266);">0%</span>
<span class="t" style="left:832px;top:421px;font-size:13.2px;line-height:18px;color:#017e84;-webkit-text-stroke:0.45px #017e84;transform:translate(0.94px,0.47px) scaleX(1.0532);">Lançamentos</span>
<span class="t" style="left:914px;top:421px;font-size:13.2px;line-height:18px;color:#017e84;-webkit-text-stroke:0.8px #017e84;transform:translate(0.17px,0.47px) scaleX(1.0051);">…</span>
<span class="t" style="left:941px;top:419px;font-size:13.8px;line-height:19px;color:#374151;transform:translate(0.79px,0.00px) scaleX(0.9676);">Teste</span> <span class="t" style="left:977px;top:419px;font-size:13.8px;line-height:19px;color:#374151;transform:translate(0.46px,0.00px) scaleX(0.9608);">4</span>
<span class="t" style="left:1139px;top:421px;font-size:13.2px;line-height:18px;color:#017e84;-webkit-text-stroke:0.45px #017e84;transform:translate(0.90px,0.47px) scaleX(1.0819);">Justificar</span>
</div>
<div class="row r5">
<span class="t" style="left:19px;top:460px;font-size:13.8px;line-height:19px;color:#374151;transform:translate(0.21px,0.00px) scaleX(1.0376);">[ADM]</span> <span class="t" style="left:62px;top:460px;font-size:13.8px;line-height:19px;color:#374151;transform:translate(0.81px,0.00px) scaleX(0.9428);">4.1</span> <span class="t" style="left:80px;top:460px;font-size:13.8px;line-height:19px;color:#374151;-webkit-text-stroke:0.35px #374151;transform:translate(0.89px,0.00px) scaleX(0.7459);">…</span>
<span class="t" style="left:101px;top:460px;font-size:13.8px;line-height:19px;color:#374151;transform:translate(0.62px,0.00px) scaleX(1.0209);">[90002]</span> <span class="t" style="left:152px;top:460px;font-size:13.8px;line-height:19px;color:#374151;transform:translate(0.53px,0.00px) scaleX(0.8431);">EVE</span> <span class="t" style="left:175px;top:460px;font-size:13.8px;line-height:19px;color:#374151;-webkit-text-stroke:0.35px #374151;transform:translate(0.81px,0.00px) scaleX(0.7610);">…</span>
<span class="t" style="left:196px;top:460px;font-size:13.8px;line-height:19px;color:#374151;transform:translate(0.56px,0.00px) scaleX(1.0282);">01/03/2025</span>
<span class="t" style="left:290px;top:460px;font-size:13.8px;line-height:19px;color:#374151;transform:translate(0.86px,0.00px) scaleX(1.0282);">30/06/2025</span>
<span class="t" style="left:487px;top:460px;font-size:13.8px;line-height:19px;color:#374151;transform:translate(0.53px,0.00px) scaleX(0.8997);">R$</span> <span class="t" style="left:507px;top:460px;font-size:13.8px;line-height:19px;color:#374151;transform:translate(0.23px,0.00px) scaleX(0.9532);">0,00</span>
<span class="t" style="left:581px;top:460px;font-size:13.8px;line-height:19px;color:#374151;transform:translate(0.73px,0.00px) scaleX(0.9018);">R$</span> <span class="t" style="left:601px;top:460px;font-size:13.8px;line-height:19px;color:#374151;transform:translate(0.47px,0.00px) scaleX(0.9553);">0,00</span>
<span class="t" style="left:676px;top:460px;font-size:13.8px;line-height:19px;color:#374151;transform:translate(0.02px,0.00px) scaleX(0.9120);">R$</span> <span class="t" style="left:695px;top:460px;font-size:13.8px;line-height:19px;color:#374151;transform:translate(0.98px,0.00px) scaleX(0.9662);">0,00</span>
<span class="t" style="left:776px;top:460px;font-size:13.8px;line-height:19px;color:#374151;transform:translate(0.20px,0.00px) scaleX(0.9266);">0%</span>
<span class="t" style="left:832px;top:462px;font-size:13.2px;line-height:18px;color:#017e84;-webkit-text-stroke:0.45px #017e84;transform:translate(0.94px,0.47px) scaleX(1.0532);">Lançamentos</span>
<span class="t" style="left:914px;top:462px;font-size:13.2px;line-height:18px;color:#017e84;-webkit-text-stroke:0.8px #017e84;transform:translate(0.17px,0.47px) scaleX(1.0051);">…</span>
<span class="t" style="left:941px;top:460px;font-size:13.8px;line-height:19px;color:#374151;transform:translate(0.79px,0.00px) scaleX(0.9625);">Teste</span>
<span class="t" style="left:1139px;top:462px;font-size:13.2px;line-height:18px;color:#017e84;-webkit-text-stroke:0.45px #017e84;transform:translate(0.90px,0.47px) scaleX(1.0819);">Justificar</span>
</div>
<div class="row r6">
<span class="t" style="left:19px;top:501px;font-size:13.8px;line-height:19px;color:#374151;transform:translate(0.21px,0.00px) scaleX(1.0376);">[ADM]</span> <span class="t" style="left:62px;top:501px;font-size:13.8px;line-height:19px;color:#374151;transform:translate(0.81px,0.00px) scaleX(0.9428);">4.1</span> <span class="t" style="left:80px;top:501px;font-size:13.8px;line-height:19px;color:#374151;-webkit-text-stroke:0.35px #374151;transform:translate(0.89px,0.00px) scaleX(0.7459);">…</span>
<span class="t" style="left:101px;top:501px;font-size:13.8px;line-height:19px;color:#374151;transform:translate(0.62px,0.00px) scaleX(1.0209);">[90002]</span> <span class="t" style="left:152px;top:501px;font-size:13.8px;line-height:19px;color:#374151;transform:translate(0.53px,0.00px) scaleX(0.8431);">EVE</span> <span class="t" style="left:175px;top:501px;font-size:13.8px;line-height:19px;color:#374151;-webkit-text-stroke:0.35px #374151;transform:translate(0.81px,0.00px) scaleX(0.7610);">…</span>
<span class="t" style="left:196px;top:501px;font-size:13.8px;line-height:19px;color:#374151;transform:translate(0.56px,0.00px) scaleX(1.0282);">01/03/2025</span>
<span class="t" style="left:290px;top:501px;font-size:13.8px;line-height:19px;color:#374151;transform:translate(0.86px,0.00px) scaleX(1.0282);">30/06/2025</span>
<span class="t" style="left:448px;top:501px;font-size:13.8px;line-height:19px;color:#374151;transform:translate(0.32px,0.00px) scaleX(0.9054);">R$</span> <span class="t" style="left:468px;top:501px;font-size:13.8px;line-height:19px;color:#374151;transform:translate(0.14px,0.00px) scaleX(0.9930);">-434.548</span> <span class="t" style="left:522px;top:501px;font-size:13.8px;line-height:19px;color:#374151;-webkit-text-stroke:0.35px #374151;transform:translate(0.24px,0.00px) scaleX(0.7502);">…</span>
<span class="t" style="left:542px;top:501px;font-size:13.8px;line-height:19px;color:#374151;transform:translate(0.21px,0.00px) scaleX(0.9142);">R$</span> <span class="t" style="left:562px;top:501px;font-size:13.8px;line-height:19px;color:#374151;transform:translate(0.23px,0.00px) scaleX(1.0027);">-405.585</span> <span class="t" style="left:616px;top:501px;font-size:13.8px;line-height:19px;color:#374151;-webkit-text-stroke:0.35px #374151;transform:translate(0.85px,0.00px) scaleX(0.7575);">…</span>
<span class="t" style="left:637px;top:501px;font-size:13.8px;line-height:19px;color:#374151;transform:translate(0.02px,0.00px) scaleX(0.9098);">R$</span> <span class="t" style="left:656px;top:501px;font-size:13.8px;line-height:19px;color:#374151;transform:translate(0.94px,0.00px) scaleX(0.9978);">-434.548</span> <span class="t" style="left:711px;top:501px;font-size:13.8px;line-height:19px;color:#374151;-webkit-text-stroke:0.35px #374151;transform:translate(0.30px,0.00px) scaleX(0.7539);">…</span>
<span class="t" style="left:749px;top:501px;font-size:13.8px;line-height:19px;color:#374151;transform:translate(0.98px,0.00px) scaleX(0.9553);">93,33%</span>
<span class="t" style="left:832px;top:503px;font-size:13.2px;line-height:18px;color:#017e84;-webkit-text-stroke:0.45px #017e84;transform:translate(0.94px,0.48px) scaleX(1.0532);">Lançamentos</span>
<span class="t" style="left:914px;top:503px;font-size:13.2px;line-height:18px;color:#017e84;-webkit-text-stroke:0.8px #017e84;transform:translate(0.17px,0.48px) scaleX(1.0051);">…</span>
<span class="t" style="left:941px;top:501px;font-size:13.8px;line-height:19px;color:#374151;transform:translate(0.79px,0.00px) scaleX(0.9625);">Teste</span>
<span class="t" style="left:1139px;top:503px;font-size:13.2px;line-height:18px;color:#017e84;-webkit-text-stroke:0.45px #017e84;transform:translate(0.90px,0.48px) scaleX(1.0819);">Justificar</span>
</div>
<div class="row r7">
<span class="t" style="left:19px;top:542px;font-size:13.8px;line-height:19px;color:#374151;transform:translate(0.21px,0.00px) scaleX(1.0376);">[ADM]</span> <span class="t" style="left:62px;top:542px;font-size:13.8px;line-height:19px;color:#374151;transform:translate(0.81px,0.00px) scaleX(0.9428);">4.1</span> <span class="t" style="left:80px;top:542px;font-size:13.8px;line-height:19px;color:#374151;-webkit-text-stroke:0.35px #374151;transform:translate(0.89px,0.00px) scaleX(0.7459);">…</span>
<span class="t" style="left:101px;top:542px;font-size:13.8px;line-height:19px;color:#374151;transform:translate(0.62px,0.00px) scaleX(1.0209);">[90002]</span> <span class="t" style="left:152px;top:542px;font-size:13.8px;line-height:19px;color:#374151;transform:translate(0.53px,0.00px) scaleX(0.8431);">EVE</span> <span class="t" style="left:175px;top:542px;font-size:13.8px;line-height:19px;color:#374151;-webkit-text-stroke:0.35px #374151;transform:translate(0.81px,0.00px) scaleX(0.7610);">…</span>
<span class="t" style="left:196px;top:542px;font-size:13.8px;line-height:19px;color:#374151;transform:translate(0.56px,0.00px) scaleX(1.0282);">01/03/2025</span>
<span class="t" style="left:290px;top:542px;font-size:13.8px;line-height:19px;color:#374151;transform:translate(0.86px,0.00px) scaleX(1.0282);">30/06/2025</span>
<span class="t" style="left:448px;top:542px;font-size:13.8px;line-height:19px;color:#374151;transform:translate(0.32px,0.00px) scaleX(0.9051);">R$</span> <span class="t" style="left:468px;top:542px;font-size:13.8px;line-height:19px;color:#374151;transform:translate(0.14px,0.00px) scaleX(0.9804);">-18.385,50</span>
<span class="t" style="left:542px;top:542px;font-size:13.8px;line-height:19px;color:#374151;transform:translate(0.52px,0.00px) scaleX(0.9084);">R$</span> <span class="t" style="left:562px;top:542px;font-size:13.8px;line-height:19px;color:#374151;transform:translate(0.41px,0.00px) scaleX(0.9840);">-18.385,50</span>
<span class="t" style="left:637px;top:542px;font-size:13.8px;line-height:19px;color:#374151;transform:translate(0.02px,0.00px) scaleX(0.9084);">R$</span> <span class="t" style="left:656px;top:542px;font-size:13.8px;line-height:19px;color:#374151;transform:translate(0.91px,0.00px) scaleX(0.9840);">-18.385,50</span>
<span class="t" style="left:760px;top:542px;font-size:13.8px;line-height:19px;color:#374151;transform:translate(0.36px,0.00px) scaleX(0.9729);">100%</span>
<span class="t" style="left:832px;top:544px;font-size:13.2px;line-height:18px;color:#017e84;-webkit-text-stroke:0.45px #017e84;transform:translate(0.94px,0.48px) scaleX(1.0532);">Lançamentos</span>
<span class="t" style="left:914px;top:544px;font-size:13.2px;line-height:18px;color:#017e84;-webkit-text-stroke:0.8px #017e84;transform:translate(0.17px,0.48px) scaleX(1.0051);">…</span>
<span class="t" style="left:1139px;top:544px;font-size:13.2px;line-height:18px;color:#017e84;-webkit-text-stroke:0.45px #017e84;transform:translate(0.90px,0.48px) scaleX(1.0819);">Justificar</span>
</div>
<div class="row r8">
<span class="t" style="left:19px;top:583px;font-size:13.8px;line-height:19px;color:#374151;transform:translate(0.21px,0.00px) scaleX(1.0376);">[ADM]</span> <span class="t" style="left:62px;top:583px;font-size:13.8px;line-height:19px;color:#374151;transform:translate(0.81px,0.00px) scaleX(0.9428);">3.2</span> <span class="t" style="left:80px;top:583px;font-size:13.8px;line-height:19px;color:#374151;-webkit-text-stroke:0.35px #374151;transform:translate(0.89px,0.00px) scaleX(0.7459);">…</span>
<span class="t" style="left:101px;top:583px;font-size:13.8px;line-height:19px;color:#374151;transform:translate(0.62px,0.00px) scaleX(1.0209);">[90002]</span> <span class="t" style="left:152px;top:583px;font-size:13.8px;line-height:19px;color:#374151;transform:translate(0.53px,0.00px) scaleX(0.8431);">EVE</span> <span class="t" style="left:175px;top:583px;font-size:13.8px;line-height:19px;color:#374151;-webkit-text-stroke:0.35px #374151;transform:translate(0.81px,0.00px) scaleX(0.7610);">…</span>
<span class="t" style="left:196px;top:583px;font-size:13.8px;line-height:19px;color:#374151;transform:translate(0.56px,0.00px) scaleX(1.0282);">01/01/2025</span>
<span class="t" style="left:290px;top:583px;font-size:13.8px;line-height:19px;color:#374151;transform:translate(0.86px,0.00px) scaleX(1.0282);">30/06/2025</span>
<span class="t" style="left:448px;top:583px;font-size:13.8px;line-height:19px;color:#374151;transform:translate(0.32px,0.00px) scaleX(0.9051);">R$</span> <span class="t" style="left:468px;top:583px;font-size:13.8px;line-height:19px;color:#374151;transform:translate(0.14px,0.00px) scaleX(0.9804);">-40.704,80</span>
<span class="t" style="left:542px;top:583px;font-size:13.8px;line-height:19px;color:#374151;transform:translate(0.52px,0.00px) scaleX(0.9084);">R$</span> <span class="t" style="left:562px;top:583px;font-size:13.8px;line-height:19px;color:#374151;transform:translate(0.41px,0.00px) scaleX(0.9840);">-40.704,80</span>
<span class="t" style="left:637px;top:583px;font-size:13.8px;line-height:19px;color:#374151;transform:translate(0.02px,0.00px) scaleX(0.9084);">R$</span> <span class="t" style="left:656px;top:583px;font-size:13.8px;line-height:19px;color:#374151;transform:translate(0.91px,0.00px) scaleX(0.9840);">-40.704,80</span>
<span class="t" style="left:760px;top:583px;font-size:13.8px;line-height:19px;color:#374151;transform:translate(0.36px,0.00px) scaleX(0.9729);">100%</span>
<span class="t" style="left:832px;top:585px;font-size:13.2px;line-height:18px;color:#017e84;-webkit-text-stroke:0.45px #017e84;transform:translate(0.94px,0.48px) scaleX(1.0532);">Lançamentos</span>
<span class="t" style="left:914px;top:585px;font-size:13.2px;line-height:18px;color:#017e84;-webkit-text-stroke:0.8px #017e84;transform:translate(0.17px,0.48px) scaleX(1.0051);">…</span>
<span class="t" style="left:1139px;top:585px;font-size:13.2px;line-height:18px;color:#017e84;-webkit-text-stroke:0.45px #017e84;transform:translate(0.90px,0.48px) scaleX(1.0819);">Justificar</span>
</div>
<div class="tfoot">
<span class="t" style="left:448px;top:624px;font-size:13.2px;line-height:18px;color:#111827;-webkit-text-stroke:0.45px #111827;transform:translate(0.51px,0.27px) scaleX(0.9824);">R$</span> <span class="t" style="left:469px;top:624px;font-size:13.2px;line-height:18px;color:#111827;-webkit-text-stroke:0.45px #111827;transform:translate(0.08px,0.27px) scaleX(1.0786);">-617.85</span> <span class="t" style="left:517px;top:624px;font-size:13.2px;line-height:18px;color:#111827;-webkit-text-stroke:0.8px #111827;transform:translate(0.37px,0.27px) scaleX(0.8140);">…</span>
<span class="t" style="left:542px;top:624px;font-size:13.2px;line-height:18px;color:#111827;-webkit-text-stroke:0.45px #111827;transform:translate(0.40px,0.27px) scaleX(0.9964);">R$</span> <span class="t" style="left:563px;top:624px;font-size:13.2px;line-height:18px;color:#111827;-webkit-text-stroke:0.45px #111827;transform:translate(0.26px,0.27px) scaleX(1.0940);">-569.44</span> <span class="t" style="left:612px;top:624px;font-size:13.2px;line-height:18px;color:#111827;-webkit-text-stroke:0.8px #111827;transform:translate(0.24px,0.27px) scaleX(0.8256);">…</span>
<span class="t" style="left:637px;top:624px;font-size:13.2px;line-height:18px;color:#111827;-webkit-text-stroke:0.45px #111827;transform:translate(0.21px,0.27px) scaleX(0.9799);">R$</span> <span class="t" style="left:657px;top:624px;font-size:13.2px;line-height:18px;color:#111827;-webkit-text-stroke:0.45px #111827;transform:translate(0.73px,0.27px) scaleX(1.0758);">-617.85</span> <span class="t" style="left:705px;top:624px;font-size:13.2px;line-height:18px;color:#111827;-webkit-text-stroke:0.8px #111827;transform:translate(0.90px,0.27px) scaleX(0.8119);">…</span>
</div>
<svg class="abs" style="left:900px;top:220px" width="340" height="430" viewBox="900 220 340 430"><rect x="919.3" y="234.3" width="296.9" height="401.7" rx="4.5" fill="none" stroke="#3a5058" stroke-opacity=".75" stroke-width="5.2"/><rect x="918.7" y="233.7" width="296.9" height="401.7" rx="4.5" fill="none" stroke="#f44336" stroke-width="5.2"/></svg>
</body></html>
